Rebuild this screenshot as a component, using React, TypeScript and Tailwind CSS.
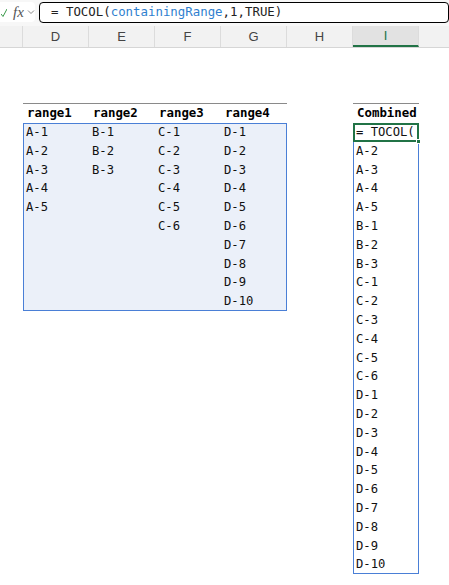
import React from 'react';

// Data for the four source ranges
const ranges: string[][] = [
  ['A-1', 'A-2', 'A-3', 'A-4', 'A-5'],
  ['B-1', 'B-2', 'B-3'],
  ['C-1', 'C-2', 'C-3', 'C-4', 'C-5', 'C-6'],
  ['D-1', 'D-2', 'D-3', 'D-4', 'D-5', 'D-6', 'D-7', 'D-8', 'D-9', 'D-10'],
];

const combined = ranges.flat();
const columns = ['D', 'E', 'F', 'G', 'H', 'I'];
const mono = { fontFamily: '"DejaVu Sans Mono", "Liberation Mono", monospace' };

// Formula bar
const FormulaBar: React.FC = () => (
  <div className="flex h-[26px] items-start bg-[#f7f7f7] pt-[2px]">
    <div className="flex h-[20px] w-[35px] items-center rounded-r-[4px] bg-white pl-[1px]">
      <svg width="6" height="9" viewBox="0 0 6 9" className="mr-[6px]">
        <path d="M0 6 L2 8.5 L6 1" fill="none" stroke="#3a9a4a" strokeWidth="1" />
      </svg>
      <span
        className="text-[15px] italic leading-none text-[#555]"
        style={{ fontFamily: '"Liberation Serif", serif' }}
      >
        fx
      </span>
      <svg width="8" height="6" viewBox="0 0 8 6" className="ml-[3px]">
        <path d="M1 1.5 L4 4.5 L7 1.5" fill="none" stroke="#888" strokeWidth="1" />
      </svg>
    </div>
    <div
      className="ml-[4px] flex h-[21px] flex-1 items-center rounded-[4px] border-[1.5px] border-black bg-white pl-[11px] text-[12.4px] text-[#222]"
      style={mono}
    >
      <span className="whitespace-pre">= TOCOL(</span>
      <span className="text-[#2f7fcf]">containingRange</span>
      <span>,1,TRUE)</span>
    </div>
  </div>
);

// Column letter header row
const ColumnHeaders: React.FC = () => (
  <div
    className="flex h-[22px] border-b border-[#d6d6d6] bg-[#f2f2f2] text-[13px] text-[#444]"
    style={{ fontFamily: '"Liberation Sans", Arial, sans-serif' }}
  >
    <div className="w-[23px] border-r border-[#dcdcdc]" />
    {columns.map((c) => (
      <div
        key={c}
        className={
          c === 'I'
            ? 'flex w-[66px] items-center justify-center border-b-2 border-r border-[#dcdcdc] border-b-[#217346] bg-[#e2e2e2] text-[#217346]'
            : 'flex w-[66px] items-center justify-center border-r border-[#dcdcdc]'
        }
      >
        {c}
      </div>
    ))}
    <div className="flex-1" />
  </div>
);

const Cell: React.FC<{ children?: React.ReactNode; bold?: boolean }> = ({ children, bold }) => (
  <div
    className={
      bold
        ? 'flex h-[18.8px] w-[66px] items-center pl-[4px] text-[12.4px] font-bold text-black'
        : 'flex h-[18.8px] w-[66px] items-center pl-[3px] text-[12.2px] text-[#111]'
    }
  >
    {children}
  </div>
);

const SourceTable: React.FC = () => (
  <div className="w-[264px]">
    <div className="flex border-t-[1.5px] border-[#8a8a8a]">
      {['range1', 'range2', 'range3', 'range4'].map((h) => (
        <Cell key={h} bold>
          {h}
        </Cell>
      ))}
    </div>
    <div className="flex bg-[#ebf0f9] outline outline-1 -outline-offset-1 outline-[#4a7fd6]">
      {ranges.map((col, i) => (
        <div key={i} className="flex flex-col">
          {Array.from({ length: 10 }).map((_, r) => (
            <Cell key={r}>{col[r] ?? ''}</Cell>
          ))}
        </div>
      ))}
    </div>
  </div>
);

const CombinedColumn: React.FC = () => (
  <div className="w-[66px]">
    <div className="border-t-[1.5px] border-[#8a8a8a]">
      <Cell bold>Combined</Cell>
    </div>
    <div className="bg-white outline outline-1 -outline-offset-1 outline-[#4a7fd6]">
      {combined.map((v, i) =>
        i === 0 ? (
          <div key={i} className="relative">
            <Cell>= TOCOL(</Cell>
            <div className="absolute inset-0 border-2 border-[#217346]" />
            <div className="absolute -bottom-[2px] -right-[2px] h-[5px] w-[5px] border border-white bg-[#217346]" />
          </div>
        ) : (
          <Cell key={i}>{v}</Cell>
        )
      )}
    </div>
  </div>
);

const App: React.FC = () => {
  return (
    <div className="h-[585px] w-[449px] overflow-hidden bg-white">
      <FormulaBar />
      <ColumnHeaders />
      <div className="mt-[55px] flex" style={mono}>
        <div className="w-[23px]" />
        <SourceTable />
        <div className="w-[66px]" />
        <CombinedColumn />
      </div>
    </div>
  );
};

export default App;
